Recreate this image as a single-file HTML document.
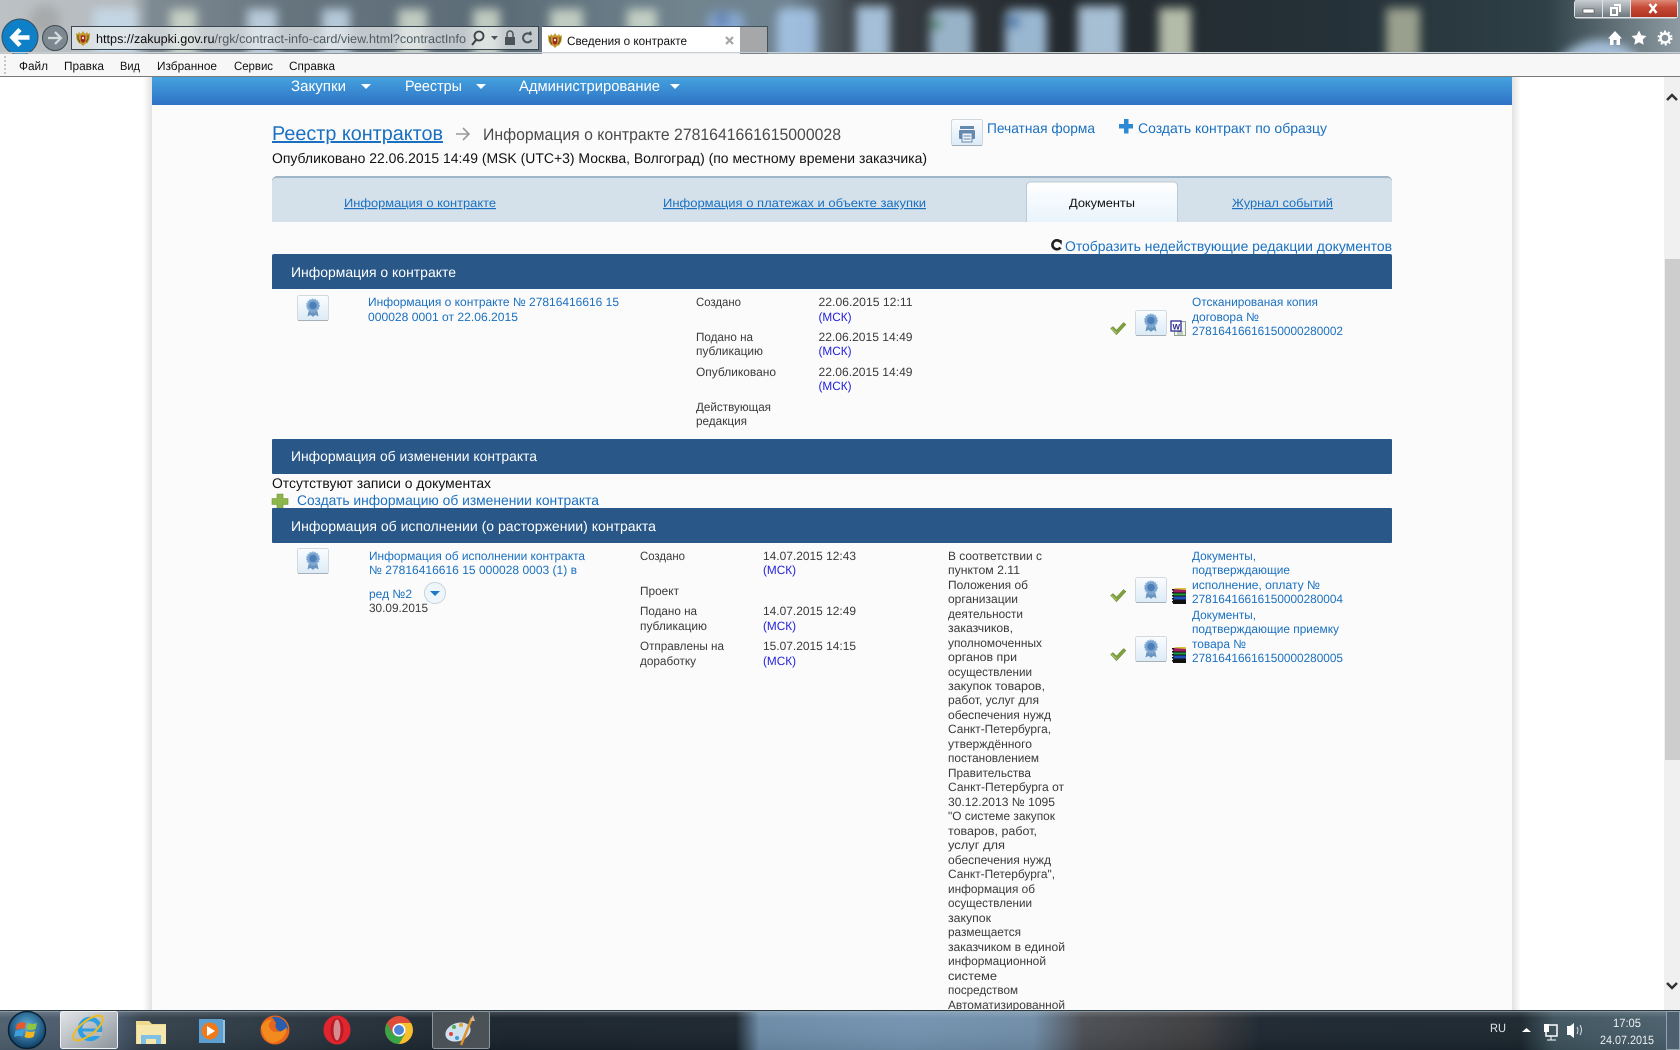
<!DOCTYPE html>
<html lang="ru"><head><meta charset="utf-8"><title>Сведения о контракте</title>
<style>
html,body{margin:0;padding:0;width:1680px;height:1050px;overflow:hidden;background:#fff}
svg{display:block;position:absolute;left:0;top:0}
text{font-family:"Liberation Sans","DejaVu Sans",sans-serif;font-size:12px;white-space:pre}
.l{fill:#1a70c0}.d{fill:#3a3a3a}.m{fill:#2222dd}.w{fill:#fff}.k{fill:#111}
.u{text-decoration:underline}
.t14{font-size:14px}.h{font-size:14px;fill:#fff}.n{font-size:15px;fill:#fff}
</style></head><body>
<svg width="1680" height="1050" viewBox="0 0 1680 1050" xmlns="http://www.w3.org/2000/svg" text-rendering="geometricPrecision">
<defs>
<linearGradient id="wp" gradientUnits="userSpaceOnUse" x1="0" x2="1680" y1="0" y2="0">
<stop offset="0" stop-color="#bcc1c4"/><stop offset=".078" stop-color="#b4babe"/><stop offset=".09" stop-color="#7f8b93"/><stop offset=".17" stop-color="#66747e"/><stop offset=".3" stop-color="#5c6c77"/><stop offset=".41" stop-color="#71858f"/><stop offset=".47" stop-color="#6f8390"/><stop offset=".51" stop-color="#3a4045"/><stop offset=".62" stop-color="#23292d"/><stop offset=".8" stop-color="#253138"/><stop offset=".92" stop-color="#2f4047"/><stop offset="1" stop-color="#8e9ba2"/></linearGradient>
<linearGradient id="nav" x1="0" x2="0" y1="0" y2="1"><stop offset="0" stop-color="#44a2de"/><stop offset="1" stop-color="#2f72c6"/></linearGradient>
<linearGradient id="tabg" x1="0" x2="0" y1="0" y2="1"><stop offset="0" stop-color="#fff"/><stop offset="1" stop-color="#e9f4fc"/></linearGradient>
<linearGradient id="btn" x1="0" x2="0" y1="0" y2="1"><stop offset="0" stop-color="#fbfdff"/><stop offset="1" stop-color="#dcebf6"/></linearGradient>
<linearGradient id="task" gradientUnits="userSpaceOnUse" x1="0" x2="1680" y1="0" y2="0">
<stop offset="0" stop-color="#4d5e6c"/><stop offset=".07" stop-color="#46566a"/><stop offset=".085" stop-color="#33414c"/><stop offset=".18" stop-color="#27333d"/><stop offset=".3" stop-color="#18222b"/><stop offset=".438" stop-color="#1a242d"/><stop offset=".452" stop-color="#6a8aa6"/><stop offset=".54" stop-color="#7292b0"/><stop offset=".615" stop-color="#6f8ca6"/><stop offset=".645" stop-color="#4a4d52"/><stop offset=".715" stop-color="#3c3c3e"/><stop offset=".75" stop-color="#1c2630"/><stop offset=".905" stop-color="#1a252d"/><stop offset=".925" stop-color="#3c525c"/><stop offset="1" stop-color="#4a606c"/></linearGradient>
<linearGradient id="tasktop" x1="0" x2="0" y1="0" y2="1"><stop offset="0" stop-color="#fff" stop-opacity=".22"/><stop offset=".2" stop-color="#fff" stop-opacity=".03"/><stop offset="1" stop-color="#000" stop-opacity=".08"/></linearGradient>
<linearGradient id="shl" x1="0" x2="1" y1="0" y2="0"><stop offset="0" stop-color="#fff"/><stop offset="1" stop-color="#e2e2e2"/></linearGradient>
<linearGradient id="shr" x1="0" x2="1" y1="0" y2="0"><stop offset="0" stop-color="#e2e2e2"/><stop offset="1" stop-color="#fff"/></linearGradient>
<linearGradient id="close" x1="0" x2="0" y1="0" y2="1"><stop offset="0" stop-color="#e59b8a"/><stop offset=".5" stop-color="#c64a36"/><stop offset="1" stop-color="#b03222"/></linearGradient>
<linearGradient id="gl" x1="0" x2="0" y1="0" y2="1"><stop offset="0" stop-color="#d6dade"/><stop offset="1" stop-color="#6d767d"/></linearGradient>
<linearGradient id="ieb" x1="0" x2="1" y1="0" y2="1"><stop offset="0" stop-color="#e2e5e8"/><stop offset="1" stop-color="#8b949b"/></linearGradient>
<radialGradient id="orb" cx=".5" cy=".4" r=".6"><stop offset="0" stop-color="#5fb3dd"/><stop offset="1" stop-color="#0d3b63"/></radialGradient>
<clipPath id="topclip"><rect width="1680" height="53"/></clipPath>
<filter id="b6" x="-50%" y="-50%" width="200%" height="200%"><feGaussianBlur stdDeviation="5"/></filter>
<symbol id="seal" viewBox="0 0 32 26" overflow="visible">
<rect x=".5" y=".5" width="31" height="25" rx="2" fill="url(#btn)" stroke="#d3d9de"/>
<path d="M1 25.500h30" stroke="#a9b1b8"/>
<path d="M12 14l-1.500 7.500 3-1.600 2.500 2 2.500-2 3 1.600L20 14z" fill="#6b93c0"/>
<circle cx="16" cy="10.500" r="6.200" fill="#7ba6d2"/><circle cx="16" cy="10.500" r="3.800" fill="#4d7fb6"/><circle cx="16" cy="10.500" r="6.600" fill="none" stroke="#9dbcdc" stroke-dasharray="1.500 1.200"/>
</symbol>
<symbol id="chk" viewBox="0 0 16 13"><path d="M.5 6.500L3 4.500 6.500 8 13.500 .5 16 2.500 6.500 12.800z" fill="#7fa13d" stroke="#5f7f2c" stroke-width=".5"/><path d="M1.500 6.500l5 4.500" stroke="#b0c87a"/></symbol>
<symbol id="rar" viewBox="0 0 16 16"><rect x="2" y="1" width="13" height="4" fill="#a01c5c"/><path d="M2 1l3-1h10v2z" fill="#d8c53c"/><rect x="2" y="5" width="13" height="3" fill="#1d9c3e"/><rect x="2" y="8" width="13" height="4" fill="#2050b8"/><rect x="2" y="12" width="13" height="4" fill="#111"/><path d="M2 1v15" stroke="#111" stroke-width="2" stroke-dasharray="1.500 1.500"/><path d="M3 5h12M3 8h12M3 12h12" stroke="#111"/></symbol>
<symbol id="crest" viewBox="0 0 16 16"><path d="M1 3l2 1 1-2 2 2 2-3 2 3 2-2 1 2 2-1-.5 6-2 4-2.500 1-2 2-2-2-2.500-1-2-4z" fill="#c09a2e"/><path d="M3 5v4l2 3M13 5v4l-2 3" stroke="#5c4a14" fill="none"/><path d="M5.800 5.500h4.400v5.500L8 13l-2.200-2z" fill="#a81f28"/><circle cx="8" cy="8" r="1.200" fill="#e8e4d0"/></symbol>
</defs>

<!-- wallpaper / browser chrome -->
<rect width="1680" height="54" fill="url(#wp)"/>
<g clip-path="url(#topclip)">
<g filter="url(#b6)" opacity=".82">
<circle cx="45" cy="20" r="15" fill="#9a9a98" opacity=".7"/>
<g fill="#c8dcec">
<rect x="93" y="8" width="44" height="55"/><rect x="247" y="9" width="30" height="55"/><rect x="322" y="9" width="28" height="55"/></g>
<g fill="#d5e0d0">
<rect x="170" y="9" width="27" height="55"/><rect x="398" y="9" width="29" height="55"/><rect x="473" y="9" width="27" height="55"/><rect x="550" y="9" width="33" height="55"/><rect x="627" y="9" width="30" height="55"/></g>
<rect x="708" y="12" width="36" height="50" rx="8" fill="#8cb0de"/>
<rect x="777" y="8" width="40" height="55" rx="8" fill="#aaccf0"/>
<rect x="856" y="6" width="34" height="55" fill="#bcdcf8"/>
<rect x="930" y="9" width="43" height="53" rx="8" fill="#b0cfe8"/>
<rect x="1005" y="9" width="42" height="53" rx="8" fill="#b4d6f4"/>
<rect x="1078" y="6" width="44" height="55" fill="#c4e0f8"/>
<rect x="1159" y="8" width="32" height="53" fill="#d4dcc4"/>
<rect x="1386" y="8" width="34" height="53" fill="#b4b8a0"/>
<circle cx="1600" cy="92" r="52" fill="#b4d2ee"/>
<circle cx="936" cy="24" r="6" fill="#5a9a70"/><circle cx="1013" cy="22" r="7" fill="#4b86c4"/><circle cx="722" cy="20" r="7" fill="#5a7fc0"/>
</g></g>
<!-- window buttons -->
<rect x="1574" y="0" width="104" height="18.500" rx="3" fill="#dfe3e6"/>
<rect x="1575" y="-2" width="27" height="19" fill="url(#gl)"/><rect x="1603" y="-2" width="27" height="19" fill="url(#gl)"/><rect x="1631" y="-2" width="46" height="19" fill="url(#close)"/>
<rect x="1583" y="9" width="11" height="4" fill="#fff" stroke="#333" stroke-width=".5"/>
<path d="M1611 8h6v7h-6zM1614 5h6v7" fill="none" stroke="#fff" stroke-width="2"/>
<path d="M1649.500 4l7 9M1656.500 4l-7 9" stroke="#fff" stroke-width="2.400"/>
<!-- back forward -->
<circle cx="20" cy="37" r="18" fill="#0e80c8" stroke="#3b4c58"/>
<path d="M29.500 37.500H13M20 29.500l-7.500 8 7.500 8" fill="none" stroke="#fff" stroke-width="4.500"/>
<circle cx="55" cy="38" r="12.500" fill="#7c8790" stroke="#3e4a52"/>
<path d="M48 38h13M55 32l6 6-6 6" fill="none" stroke="#d6dbde" stroke-width="2.200"/>
<!-- address -->
<rect x="71.500" y="26.500" width="467" height="23" fill="#e8ebed" fill-opacity=".72" stroke="#3a4650"/>
<use href="#crest" x="75" y="30" width="16" height="16"/>
<text y="43" x="96" textLength="370" lengthAdjust="spacingAndGlyphs" style="font-size:12.500px"><tspan fill="#0c0c0c">https://zakupki.gov.ru</tspan><tspan fill="#4e5a62">/rgk/contract-info-card/view.html?contractInfo</tspan></text>
<circle cx="479" cy="36" r="4.500" fill="none" stroke="#3a4247" stroke-width="1.800"/><path d="M476 40l-4 5" stroke="#3a4247" stroke-width="2"/>
<path d="M491 36h7l-3.500 4z" fill="#4a5358"/>
<rect x="505" y="37" width="10" height="8" fill="#4a5358"/><path d="M507 37v-3a3 3 0 0 1 6 0v3" fill="none" stroke="#4a5358" stroke-width="1.500"/>
<path d="M531 35a4.500 4.500 0 1 0 .5 5" fill="none" stroke="#4a5358" stroke-width="2"/><path d="M528 33l4 2-1-4z" fill="#4a5358"/>
<!-- tab -->
<rect x="739.500" y="26.500" width="28" height="27" fill="#a5a7a9" stroke="#40505c"/>
<rect x="542" y="26" width="198" height="28" fill="#fff"/>
<path d="M542 26.500h198" stroke="#40505c"/>
<use href="#crest" x="547" y="32" width="16" height="16"/>
<text x="567" y="45" textLength="120" lengthAdjust="spacingAndGlyphs" class="k">Сведения о контракте</text>
<path d="M726 37l7 7M733 37l-7 7" stroke="#a6a6a6" stroke-width="2.200"/>
<!-- home/star/gear -->
<path d="M1608 38.500l7-7.500 7 7.500h-2V45h-3.500v-5h-3v5H1610v-6.500z" fill="#fff"/>
<path d="M1639 30.500l2.300 4.800 5.200.7-3.800 3.600 1 5.200-4.700-2.500-4.700 2.500 1-5.200-3.800-3.600 5.200-.7z" fill="#fff"/>
<circle cx="1665" cy="38" r="4.500" fill="none" stroke="#fff" stroke-width="2.400"/><circle cx="1665" cy="38" r="6.500" fill="none" stroke="#fff" stroke-width="2" stroke-dasharray="2 2.200"/>
<!-- menu -->
<rect y="52" width="1680" height="1.400" fill="#c9ced2"/>
<rect y="54" width="1680" height="22" fill="#f7f7f7"/>
<rect y="76" width="1680" height="1" fill="#7a7a7a"/>
<path d="M5 56v19" stroke="#b5b5b5" stroke-dasharray="2 2" stroke-width="1.500"/>
<g class="k">
<text x="19" y="70" textLength="29" lengthAdjust="spacingAndGlyphs">Файл</text>
<text x="64" y="70" textLength="40" lengthAdjust="spacingAndGlyphs">Правка</text>
<text x="120" y="70" textLength="20" lengthAdjust="spacingAndGlyphs">Вид</text>
<text x="157" y="70" textLength="60" lengthAdjust="spacingAndGlyphs">Избранное</text>
<text x="234" y="70" textLength="39" lengthAdjust="spacingAndGlyphs">Сервис</text>
<text x="289" y="70" textLength="46" lengthAdjust="spacingAndGlyphs">Справка</text>
</g>

<!-- page -->
<rect y="77" width="1664" height="933" fill="#fff"/>
<rect x="143" y="77" width="9" height="933" fill="url(#shl)"/>
<rect x="1512" y="77" width="9" height="933" fill="url(#shr)"/>
<rect x="152" y="105" width="1360" height="905" fill="#fbfbfb"/>
<rect x="152" y="77" width="1360" height="28" fill="url(#nav)"/>
<text x="291" y="91" textLength="55" lengthAdjust="spacingAndGlyphs" class="n">Закупки</text><path d="M361 84h10l-5 5z" fill="#fff"/>
<text x="405" y="91" textLength="57" lengthAdjust="spacingAndGlyphs" class="n">Реестры</text><path d="M476 84h10l-5 5z" fill="#fff"/>
<text x="519" y="91" textLength="141" lengthAdjust="spacingAndGlyphs" class="n">Администрирование</text><path d="M670 84h10l-5 5z" fill="#fff"/>

<!-- title -->
<text x="272" y="140" textLength="171" lengthAdjust="spacingAndGlyphs" class="l u" style="font-size:20px">Реестр контрактов</text>
<path d="M456 134h13M463 128l6 6-6 6" fill="none" stroke="#9a9a9a" stroke-width="1.600"/>
<text x="483" y="140" textLength="358" lengthAdjust="spacingAndGlyphs" fill="#4a4a4a" style="font-size:16.500px">Информация о контракте 2781641661615000028</text>
<text x="272" y="163" textLength="655" lengthAdjust="spacingAndGlyphs" class="k t14">Опубликовано 22.06.2015 14:49 (MSK (UTC+3) Москва, Волгоград) (по местному времени заказчика)</text>
<!-- print / create -->
<rect x="951.500" y="119.500" width="31" height="26" rx="2" fill="url(#btn)" stroke="#cfd6dc"/><path d="M952 145.500h30" stroke="#a5adb4"/>
<path d="M960 126h14v3h-14z" fill="#6689ae"/><rect x="959" y="130" width="16" height="9" rx="1" fill="#6689ae"/><rect x="962" y="133" width="10" height="9" fill="#eef4f9" stroke="#6689ae"/><path d="M963.500 136h7M963.500 139h7" stroke="#6689ae"/>
<text x="987" y="133" textLength="108" lengthAdjust="spacingAndGlyphs" class="l t14">Печатная форма</text>
<path d="M1124 119h4.500v5h4.500v4.500h-4.500v5h-4.500v-5h-5v-4.500h5z" fill="#2c8ad4"/>
<text x="1138" y="133" textLength="189" lengthAdjust="spacingAndGlyphs" class="l t14">Создать контракт по образцу</text>

<!-- tabs -->
<path d="M272 222V181a5 5 0 0 1 5-5h1110a5 5 0 0 1 5 5v41z" fill="#d5e1ea"/>
<path d="M272 181a5 5 0 0 1 5-5h1110a5 5 0 0 1 5 5v1a4 4 0 0 0-4-4H276a4 4 0 0 0-4 4z" fill="#9fb6c9"/>
<path d="M1026.500 222v-36a4 4 0 0 1 4-4h143a4 4 0 0 1 4 4v36z" fill="url(#tabg)"/>
<path d="M1026.500 222v-36a4 4 0 0 1 4-4h143a4 4 0 0 1 4 4v36" fill="none" stroke="#bccad6"/>
<text x="344" y="207" textLength="152" lengthAdjust="spacingAndGlyphs" class="l u">Информация о контракте</text>
<text x="663" y="207" textLength="263" lengthAdjust="spacingAndGlyphs" class="l u">Информация о платежах и объекте закупки</text>
<text x="1069" y="207" textLength="66" lengthAdjust="spacingAndGlyphs" class="k">Документы</text>
<text x="1232" y="207" textLength="101" lengthAdjust="spacingAndGlyphs" class="l u">Журнал событий</text>

<!-- show inactive -->
<path d="M1060 241.500a4.500 4.500 0 1 0 .5 6" fill="none" stroke="#222" stroke-width="2.600"/><path d="M1057 239l5 1.500-.5 4.500z" fill="#222"/>
<text x="1065" y="251" textLength="327" lengthAdjust="spacingAndGlyphs" class="l t14">Отобразить недействующие редакции документов</text>

<!-- section 1 -->
<path d="M272 289v-33a2 2 0 0 1 2-2h1116a2 2 0 0 1 2 2v33z" fill="#285788"/>
<text x="291" y="277" textLength="165" lengthAdjust="spacingAndGlyphs" class="h">Информация о контракте</text>
<use href="#seal" x="297" y="295" width="32" height="26"/>
<g class="l">
<text x="368" y="306" textLength="251" lengthAdjust="spacingAndGlyphs">Информация о контракте № 27816416616 15</text>
<text x="368" y="321" textLength="150" lengthAdjust="spacingAndGlyphs">000028 0001 от 22.06.2015</text>
</g>
<g class="d">
<text x="696" y="306" textLength="45" lengthAdjust="spacingAndGlyphs">Создано</text>
<text x="696" y="341" textLength="57" lengthAdjust="spacingAndGlyphs">Подано на</text>
<text x="696" y="355" textLength="67" lengthAdjust="spacingAndGlyphs">публикацию</text>
<text x="696" y="376" textLength="80" lengthAdjust="spacingAndGlyphs">Опубликовано</text>
<text x="696" y="411" textLength="75" lengthAdjust="spacingAndGlyphs">Действующая</text>
<text x="696" y="425" textLength="51" lengthAdjust="spacingAndGlyphs">редакция</text>
<text x="818.500" y="306" textLength="94" lengthAdjust="spacingAndGlyphs">22.06.2015 12:11</text>
<text x="818.500" y="341" textLength="94" lengthAdjust="spacingAndGlyphs">22.06.2015 14:49</text>
<text x="818.500" y="376" textLength="94" lengthAdjust="spacingAndGlyphs">22.06.2015 14:49</text>
</g>
<g class="m">
<text x="818.500" y="321" textLength="33" lengthAdjust="spacingAndGlyphs">(МСК)</text>
<text x="818.500" y="355" textLength="33" lengthAdjust="spacingAndGlyphs">(МСК)</text>
<text x="818.500" y="390" textLength="33" lengthAdjust="spacingAndGlyphs">(МСК)</text>
</g>
<use href="#chk" x="1110" y="322" width="16" height="13"/>
<use href="#seal" x="1135" y="310" width="32" height="26"/>
<rect x="1174.500" y="321.500" width="11" height="14" fill="#f4f6f4" stroke="#90a090"/><path d="M1177 332h6M1177 334h6" stroke="#90a090"/><rect x="1171" y="321" width="10" height="10" fill="#fff" stroke="#2b2b90" stroke-width="1.300"/><text x="1172.500" y="329.500" fill="#2b2b90" style="font-size:8px;font-weight:bold">W</text>
<g class="l">
<text x="1192" y="306" textLength="126" lengthAdjust="spacingAndGlyphs">Отсканированая копия</text>
<text x="1192" y="321" textLength="67" lengthAdjust="spacingAndGlyphs">договора №</text>
<text x="1192" y="335" textLength="151" lengthAdjust="spacingAndGlyphs">27816416616150000280002</text>
</g>

<!-- section 2 -->
<rect x="272" y="439" width="1120" height="35" rx="1" fill="#285788"/>
<text x="291" y="461" textLength="246" lengthAdjust="spacingAndGlyphs" class="h">Информация об изменении контракта</text>
<text x="272" y="488" textLength="219" lengthAdjust="spacingAndGlyphs" class="k t14">Отсутствуют записи о документах</text>
<path d="M277 494h6v4.500h5v6h-5v4.500h-6v-4.500h-5v-6h5z" fill="#8cb54a" stroke="#6f9236" stroke-width=".6"/>
<text x="297" y="505" textLength="302" lengthAdjust="spacingAndGlyphs" class="l t14">Создать информацию об изменении контракта</text>

<!-- section 3 -->
<rect x="272" y="508" width="1120" height="35" rx="1" fill="#285788"/>
<text x="291" y="531" textLength="365" lengthAdjust="spacingAndGlyphs" class="h">Информация об исполнении (о расторжении) контракта</text>
<use href="#seal" x="297" y="548" width="32" height="26"/>
<g class="l">
<text x="369" y="560" textLength="216" lengthAdjust="spacingAndGlyphs">Информация об исполнении контракта</text>
<text x="369" y="574" textLength="208" lengthAdjust="spacingAndGlyphs">№ 27816416616 15 000028 0003 (1) в</text>
<text x="369" y="598" textLength="43" lengthAdjust="spacingAndGlyphs">ред №2</text>
</g>
<circle cx="435" cy="593" r="10.500" fill="#eef6fc" stroke="#c8d2da"/><path d="M430 591h10l-5 5z" fill="#1f78c6"/>
<text x="369" y="612" textLength="59" lengthAdjust="spacingAndGlyphs" class="d">30.09.2015</text>
<g class="d">
<text x="640" y="560" textLength="45" lengthAdjust="spacingAndGlyphs">Создано</text>
<text x="640" y="595" textLength="39" lengthAdjust="spacingAndGlyphs">Проект</text>
<text x="640" y="615" textLength="57" lengthAdjust="spacingAndGlyphs">Подано на</text>
<text x="640" y="630" textLength="67" lengthAdjust="spacingAndGlyphs">публикацию</text>
<text x="640" y="650" textLength="84" lengthAdjust="spacingAndGlyphs">Отправлены на</text>
<text x="640" y="665" textLength="56" lengthAdjust="spacingAndGlyphs">доработку</text>
<text x="763" y="560" textLength="93" lengthAdjust="spacingAndGlyphs">14.07.2015 12:43</text>
<text x="763" y="615" textLength="93" lengthAdjust="spacingAndGlyphs">14.07.2015 12:49</text>
<text x="763" y="650" textLength="93" lengthAdjust="spacingAndGlyphs">15.07.2015 14:15</text>
</g>
<g class="m">
<text x="763" y="574" textLength="33" lengthAdjust="spacingAndGlyphs">(МСК)</text>
<text x="763" y="630" textLength="33" lengthAdjust="spacingAndGlyphs">(МСК)</text>
<text x="763" y="665" textLength="33" lengthAdjust="spacingAndGlyphs">(МСК)</text>
</g>
<g class="d">
<text x="948" y="560" textLength="94" lengthAdjust="spacingAndGlyphs">В соответствии с</text>
<text x="948" y="574" textLength="72" lengthAdjust="spacingAndGlyphs">пунктом 2.11</text>
<text x="948" y="589" textLength="80" lengthAdjust="spacingAndGlyphs">Положения об</text>
<text x="948" y="603" textLength="70" lengthAdjust="spacingAndGlyphs">организации</text>
<text x="948" y="618" textLength="75" lengthAdjust="spacingAndGlyphs">деятельности</text>
<text x="948" y="632" textLength="65" lengthAdjust="spacingAndGlyphs">заказчиков,</text>
<text x="948" y="647" textLength="94" lengthAdjust="spacingAndGlyphs">уполномоченных</text>
<text x="948" y="661" textLength="69" lengthAdjust="spacingAndGlyphs">органов при</text>
<text x="948" y="676" textLength="84" lengthAdjust="spacingAndGlyphs">осуществлении</text>
<text x="948" y="690" textLength="97" lengthAdjust="spacingAndGlyphs">закупок товаров,</text>
<text x="948" y="704" textLength="91" lengthAdjust="spacingAndGlyphs">работ, услуг для</text>
<text x="948" y="719" textLength="103" lengthAdjust="spacingAndGlyphs">обеспечения нужд</text>
<text x="948" y="733" textLength="103" lengthAdjust="spacingAndGlyphs">Санкт-Петербурга,</text>
<text x="948" y="748" textLength="84" lengthAdjust="spacingAndGlyphs">утверждённого</text>
<text x="948" y="762" textLength="91" lengthAdjust="spacingAndGlyphs">постановлением</text>
<text x="948" y="777" textLength="83" lengthAdjust="spacingAndGlyphs">Правительства</text>
<text x="948" y="791" textLength="116" lengthAdjust="spacingAndGlyphs">Санкт-Петербурга от</text>
<text x="948" y="806" textLength="107" lengthAdjust="spacingAndGlyphs">30.12.2013 № 1095</text>
<text x="948" y="820" textLength="107" lengthAdjust="spacingAndGlyphs">"О системе закупок</text>
<text x="948" y="835" textLength="89" lengthAdjust="spacingAndGlyphs">товаров, работ,</text>
<text x="948" y="849" textLength="57" lengthAdjust="spacingAndGlyphs">услуг для</text>
<text x="948" y="864" textLength="103" lengthAdjust="spacingAndGlyphs">обеспечения нужд</text>
<text x="948" y="878" textLength="107" lengthAdjust="spacingAndGlyphs">Санкт-Петербурга",</text>
<text x="948" y="893" textLength="87" lengthAdjust="spacingAndGlyphs">информация об</text>
<text x="948" y="907" textLength="84" lengthAdjust="spacingAndGlyphs">осуществлении</text>
<text x="948" y="922" textLength="43" lengthAdjust="spacingAndGlyphs">закупок</text>
<text x="948" y="936" textLength="73" lengthAdjust="spacingAndGlyphs">размещается</text>
<text x="948" y="951" textLength="117" lengthAdjust="spacingAndGlyphs">заказчиком в единой</text>
<text x="948" y="965" textLength="98" lengthAdjust="spacingAndGlyphs">информационной</text>
<text x="948" y="980" textLength="49" lengthAdjust="spacingAndGlyphs">системе</text>
<text x="948" y="994" textLength="70" lengthAdjust="spacingAndGlyphs">посредством</text>
<text x="948" y="1009" textLength="117" lengthAdjust="spacingAndGlyphs">Автоматизированной</text>
</g>
<use href="#chk" x="1110" y="589" width="16" height="13"/>
<use href="#seal" x="1135" y="577" width="32" height="26"/>
<use href="#rar" x="1171" y="588" width="16" height="16"/>
<use href="#chk" x="1110" y="648" width="16" height="13"/>
<use href="#seal" x="1135" y="636" width="32" height="26"/>
<use href="#rar" x="1171" y="647" width="16" height="16"/>
<g class="l">
<text x="1192" y="560" textLength="64" lengthAdjust="spacingAndGlyphs">Документы,</text>
<text x="1192" y="574" textLength="98" lengthAdjust="spacingAndGlyphs">подтверждающие</text>
<text x="1192" y="589" textLength="128" lengthAdjust="spacingAndGlyphs">исполнение, оплату №</text>
<text x="1192" y="603" textLength="151" lengthAdjust="spacingAndGlyphs">27816416616150000280004</text>
<text x="1192" y="619" textLength="64" lengthAdjust="spacingAndGlyphs">Документы,</text>
<text x="1192" y="633" textLength="147" lengthAdjust="spacingAndGlyphs">подтверждающие приемку</text>
<text x="1192" y="648" textLength="54" lengthAdjust="spacingAndGlyphs">товара №</text>
<text x="1192" y="662" textLength="151" lengthAdjust="spacingAndGlyphs">27816416616150000280005</text>
</g>

<!-- scrollbar -->
<rect x="1664" y="77" width="16" height="933" fill="#f0f0f0"/>
<rect x="1665" y="259" width="15" height="501" fill="#cdcdcd"/>
<path d="M1667 100l5-5 5 5" fill="none" stroke="#333" stroke-width="2.500"/>
<path d="M1667 983l5 5 5-5" fill="none" stroke="#333" stroke-width="2.500"/>

<!-- taskbar -->
<rect y="1010" width="1680" height="40" fill="url(#task)"/>
<rect y="1010" width="1680" height="40" fill="url(#tasktop)"/>
<rect y="1010" width="1680" height="1" fill="#2b3840"/>
<rect y="1011" width="1680" height="1" fill="#93a5b2" opacity=".7"/>
<!-- start -->
<circle cx="27" cy="1030" r="18.500" fill="url(#orb)" stroke="#0b2236" stroke-width="1.500"/>
<path d="M17 1024q5-3 9-1l-1.500 6q-4-1.500-9 1z" fill="#e8582a"/><path d="M28 1023q5 2 9 0l-1.500 6q-4 2-9 0z" fill="#8ec63f"/><path d="M15.500 1031q5-2 8.500-.5l-1.500 6q-4-1.500-8.500.5z" fill="#3f9fdc"/><path d="M26 1031q4 2 9 0l-1.500 6q-5 2-9 0z" fill="#f2b51c"/>
<!-- IE -->
<rect x="60.500" y="1011.500" width="57" height="37" rx="2" fill="url(#ieb)" stroke="#eef0f2"/>
<circle cx="90" cy="1029" r="10" fill="none" stroke="#2f9fe4" stroke-width="4.500"/><path d="M80 1030h20" stroke="#2f9fe4" stroke-width="3"/><rect x="92" y="1032" width="10" height="4" fill="#b4babf"/>
<ellipse cx="88" cy="1028" rx="18" ry="7" fill="none" stroke="#eebb22" stroke-width="2" transform="rotate(-38 88 1028)"/>
<!-- explorer -->
<path d="M136 1021h13l3 3h14v20h-30z" fill="#efd98f"/><rect x="137" y="1025" width="29" height="19" fill="#f6e7ad"/><path d="M141 1035h20v9h-5v-5h-10v5h-5z" fill="#7fc1e6"/>
<!-- wmp -->
<rect x="203" y="1020" width="22" height="23" fill="#97c3e2"/><rect x="199" y="1019" width="24" height="24" fill="#5d9fd0"/><circle cx="210" cy="1031" r="8.500" fill="#ee7a1b"/><path d="M207 1026l8 5-8 5z" fill="#fff"/>
<!-- firefox -->
<circle cx="275" cy="1030" r="14.500" fill="#e8661c"/><path d="M272 1017a13.500 13.500 0 0 1 16 11q-2 6-9 3-5-3-3-8z" fill="#2a5dab"/><path d="M261 1027q4-8 11-7-4 3-3 7 2 5 8 5 5 0 10-5-1 13-14 16-9-1-12-16z" fill="#f28a1e"/>
<!-- opera -->
<ellipse cx="337" cy="1030" rx="13.500" ry="14.500" fill="#e0252f"/><ellipse cx="337" cy="1030" rx="6.500" ry="12" fill="#b81a24"/><ellipse cx="337" cy="1030" rx="3.500" ry="10.500" fill="#d98c90"/>
<!-- chrome -->
<circle cx="399" cy="1030" r="14" fill="#dd4b39"/><path d="M387 1023a14 14 0 0 0 12 21l6-10h-12z" fill="#3aa546"/><path d="M399 1044a14 14 0 0 0 12-21h-12l6 11z" fill="#f5c02c"/><circle cx="399" cy="1030" r="6.500" fill="#fff"/><circle cx="399" cy="1030" r="5" fill="#4d86d8"/>
<!-- paint -->
<rect x="432.500" y="1011.500" width="57" height="37" rx="2" fill="#4a5157" stroke="#8c959b"/>
<ellipse cx="458" cy="1032" rx="13" ry="9" fill="#cfe2f0" transform="rotate(-20 458 1032)"/>
<circle cx="451" cy="1034" r="2" fill="#d44"/><circle cx="454" cy="1027" r="2" fill="#5a5"/><circle cx="461" cy="1025" r="2" fill="#e9a52b"/><circle cx="457" cy="1038" r="2" fill="#49d"/>
<path d="M461 1045l11-27" stroke="#e0902b" stroke-width="2.500"/><path d="M470 1021l3-6 2 6z" fill="#d8b890"/>
<!-- tray -->
<text x="1490" y="1032" textLength="16" lengthAdjust="spacingAndGlyphs" fill="#dfe4e8">RU</text>
<path d="M1522 1032l4.500-4 4.500 4z" fill="#fff"/>
<rect x="1546" y="1025" width="11" height="11" fill="none" stroke="#fff" stroke-width="1.500"/><path d="M1547 1040h9M1551 1036v4" stroke="#fff"/><rect x="1544" y="1024" width="5" height="8" fill="#fff"/>
<path d="M1567 1026h3l4-3v15l-4-3h-3z" fill="#fff"/><path d="M1577 1027q2 3 0 7M1580 1025q3 5 0 10" fill="none" stroke="#dfe4e8"/>
<text x="1613" y="1027" textLength="28" lengthAdjust="spacingAndGlyphs" fill="#eef1f3">17:05</text>
<text x="1600" y="1044" textLength="54" lengthAdjust="spacingAndGlyphs" fill="#eef1f3">24.07.2015</text>
<rect x="1666.500" y="1011.500" width="13" height="38" fill="#4d6070" stroke="#93a3ae"/>
</svg>
</body></html>
